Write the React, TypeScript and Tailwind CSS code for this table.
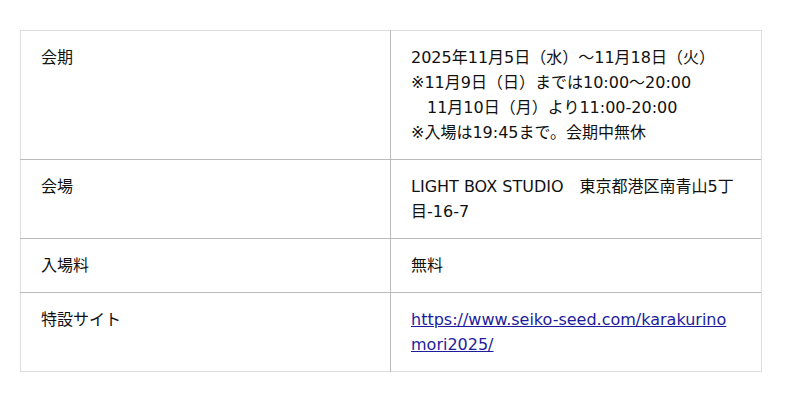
import React from "react"

const rows: { label: string; value: React.ReactNode }[] = [
  {
    label: "会期",
    value: (
      <>
        2025年11月5日（水）～11月18日（火）
        <br />
        ※11月9日（日）までは10:00～20:00
        <br />
        {"\u300011月10日（月）より11:00-20:00"}
        <br />
        ※入場は19:45まで。会期中無休
      </>
    ),
  },
  { label: "会場", value: "LIGHT BOX STUDIO\u3000東京都港区南青山5丁目-16-7" },
  { label: "入場料", value: "無料" },
  {
    label: "特設サイト",
    value: (
      <a href="#" className="text-[#1c1c9c] underline break-all">
        https://www.seiko-seed.com/karakurinomori2025/
      </a>
    ),
  },
]

export default function App() {
  return (
    <div className="w-[800px] h-[402px] bg-white pt-[30px] pl-[20px] font-['DejaVu_Sans','Noto_Sans_CJK_JP',sans-serif] text-[16px] leading-[25px] text-[#111]">
      <table className="w-[742px] table-fixed border-collapse border border-[#dddddd]">
        <tbody>
          {rows.map((row) => (
            <tr key={row.label} className="border-b border-[#bbbbbb] last:border-b-[#dddddd]">
              <td className="w-[370px] align-top px-5 py-[14px] border-r border-[#bbbbbb]">{row.label}</td>
              <td className="align-top px-5 py-[14px] border-r border-[#dddddd]">{row.value}</td>
            </tr>
          ))}
        </tbody>
      </table>
    </div>
  )
}
